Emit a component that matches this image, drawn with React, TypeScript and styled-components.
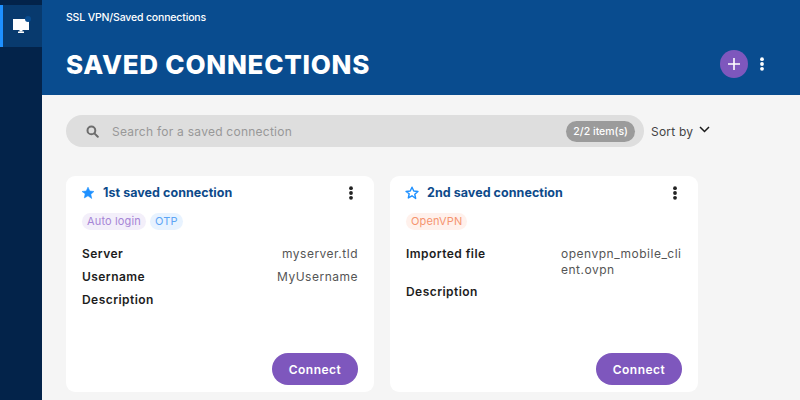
import React from 'react';
import styled, { createGlobalStyle } from 'styled-components';

const GlobalStyle = createGlobalStyle`
  html, body {
    margin: 0;
    height: 100%;
    overflow: hidden;
  }
  #root {
    height: 100%;
  }
  * {
    box-sizing: border-box;
  }
  body {
    font-family: Inter, "Noto Sans", "Liberation Sans", sans-serif;
    background: #f5f5f5;
  }
`;

const Shell = styled.div`
  display: flex;
  width: 800px;
  height: 400px;
`;

const Sidebar = styled.nav`
  width: 42px;
  flex: none;
  padding-top: 5px;
  background: #03234a;
`;

const NavItem = styled.div`
  display: flex;
  align-items: flex-start;
  height: 42px;
  padding: 11px 0 0 9px;
  border-left: 3px solid #1e90ff;
  background: #083a6e;
`;

const Main = styled.main`
  flex: 1;
  display: flex;
  flex-direction: column;
  min-width: 0;
`;

const Header = styled.header`
  height: 95px;
  flex: none;
  padding: 11px 24px 0;
  background: #094c8f;
  color: #fff;
`;

const Breadcrumb = styled.div`
  height: 13px;
  font-size: 10.5px;
  line-height: 13px;
  font-weight: 500;
  letter-spacing: -0.16px;
`;

const TitleRow = styled.div`
  display: flex;
  align-items: center;
  justify-content: space-between;
  margin-top: 24px;
  height: 32px;
`;

const Title = styled.h1`
  margin: 2px 0 0;
  font-size: 26px;
  line-height: 32px;
  font-weight: 800;
  letter-spacing: 0.75px;
`;

const HeaderActions = styled.div`
  display: flex;
  align-items: center;
  gap: 11px;
  margin-right: 11px;
`;

const AddButton = styled.button`
  display: flex;
  align-items: center;
  justify-content: center;
  width: 28px;
  height: 28px;
  padding: 0;
  border: 0;
  border-radius: 50%;
  background: #7e57bd;
`;

const Content = styled.div`
  flex: 1;
  padding: 20px 24px 0;
`;

const SearchRow = styled.div`
  display: flex;
  align-items: center;
  gap: 7px;
  height: 32px;
`;

const SearchBar = styled.div`
  width: 578px;
  height: 32px;
  display: flex;
  align-items: center;
  padding: 0 9px 0 20px;
  border-radius: 16px;
  background: #dedede;
`;

const Placeholder = styled.span`
  flex: 1;
  margin-left: 13px;
  font-size: 12px;
  letter-spacing: 0.25px;
  color: #989898;
`;

const Count = styled.span`
  height: 21px;
  padding: 0 7px;
  border-radius: 11px;
  background: #9b9b9b;
  color: #fff;
  font-size: 10.5px;
  line-height: 21px;
  font-weight: 500;
`;

const SortBy = styled.div`
  display: flex;
  align-items: center;
  gap: 6px;
  font-size: 12px;
  letter-spacing: 0.2px;
  color: #444;
`;

const ChevronWrap = styled.span`
  display: flex;
  margin-bottom: 4px;
`;

const Cards = styled.div`
  display: flex;
  gap: 16px;
  margin-top: 29px;
`;

const Card = styled.section`
  position: relative;
  width: 308px;
  height: 216px;
  padding: 8px 20px 0 15px;
  border-radius: 9px;
  background: #fff;
`;

const CardHead = styled.div`
  display: flex;
  align-items: center;
  height: 18px;
`;

const CardTitle = styled.h2`
  flex: 1;
  margin: 0 0 0 8px;
  font-size: 12.5px;
  line-height: 18px;
  font-weight: 700;
  letter-spacing: 0.05px;
  color: #0d4a8a;
`;

const Tags = styled.div`
  display: flex;
  gap: 4px;
  margin: 11px 0 0 1px;
`;

const Tag = styled.span<{ $bg: string; $fg: string }>`
  height: 17px;
  padding: 0 5px;
  border-radius: 9px;
  font-size: 11px;
  line-height: 17px;
  letter-spacing: 0.15px;
  background: ${({ $bg }) => $bg};
  color: ${({ $fg }) => $fg};
`;

const Rows = styled.dl`
  display: grid;
  grid-template-columns: 155px 121px;
  row-gap: 7px;
  margin: 16px 0 0 1px;
`;

const Label = styled.dt`
  font-size: 12px;
  line-height: 16px;
  font-weight: 600;
  letter-spacing: 0.45px;
  color: #1d1d1d;
`;

const Value = styled.dd<{ $wrap?: boolean }>`
  margin: 0;
  font-size: 12px;
  line-height: 15.5px;
  letter-spacing: 0.5px;
  color: #555;
  text-align: ${({ $wrap }) => ($wrap ? 'left' : 'right')};
  overflow-wrap: anywhere;
`;

const ConnectButton = styled.button`
  position: absolute;
  right: 16px;
  bottom: 7px;
  width: 86px;
  height: 32px;
  padding: 0;
  border: 0;
  border-radius: 16px;
  background: #7e57bd;
  color: #fff;
  font-family: inherit;
  font-size: 12px;
  font-weight: 600;
  letter-spacing: 0.5px;
`;

const Kebab = ({ color }: { color: string }) => (
  <svg width="6" height="14" viewBox="0 0 6 14" fill={color}>
    <circle cx="3" cy="2.2" r="1.9" />
    <circle cx="3" cy="7" r="1.9" />
    <circle cx="3" cy="11.8" r="1.9" />
  </svg>
);

const Star = ({ filled }: { filled?: boolean }) => (
  <svg width="14" height="14" viewBox="0 0 24 24" fill={filled ? '#1e90ff' : 'none'} stroke="#1e90ff" strokeWidth={filled ? 1 : 2.4} strokeLinejoin="round">
    <path d="M12 2l3 6.6 7.2.8-5.4 4.9 1.5 7.1L12 16.8l-6.3 3.6 1.5-7.1L1.8 9.4 9 8.6z" />
  </svg>
);

const Monitor = () => (
  <svg width="20" height="17" viewBox="0 0 20 17">
    <rect x="1" y="3" width="16" height="11" fill="#fff" />
    <rect x="7.5" y="14" width="3" height="1.5" fill="#fff" />
    <rect x="6" y="15.5" width="6" height="1.5" fill="#fff" />
    <circle cx="16" cy="3" r="3" fill="#094c8f" />
  </svg>
);

const SearchIcon = () => (
  <svg width="13" height="13" viewBox="0 0 13 13" fill="none" stroke="#6d6d6d" strokeWidth="2" strokeLinecap="round">
    <circle cx="5.4" cy="5.4" r="3.9" />
    <path d="M8.4 8.4l3.4 3.4" />
  </svg>
);

const Plus = () => (
  <svg width="14" height="14" viewBox="0 0 14 14" stroke="#fff" strokeWidth="1.6">
    <path d="M7 1v12M1 7h12" />
  </svg>
);

const Chevron = () => (
  <svg width="11" height="7" viewBox="0 0 11 7" fill="none" stroke="#1a1a1a" strokeWidth="1.5">
    <path d="M1 1l4.5 4.5L10 1" />
  </svg>
);

export default function App() {
  return (
    <Shell>
      <GlobalStyle />
      <Sidebar>
        <NavItem>
          <Monitor />
        </NavItem>
      </Sidebar>
      <Main>
        <Header>
          <Breadcrumb>SSL VPN/Saved connections</Breadcrumb>
          <TitleRow>
            <Title>SAVED CONNECTIONS</Title>
            <HeaderActions>
              <AddButton>
                <Plus />
              </AddButton>
              <Kebab color="#fff" />
            </HeaderActions>
          </TitleRow>
        </Header>
        <Content>
          <SearchRow>
            <SearchBar>
              <SearchIcon />
              <Placeholder>Search for a saved connection</Placeholder>
              <Count>2/2 item(s)</Count>
            </SearchBar>
            <SortBy>
              Sort by
              <ChevronWrap>
                <Chevron />
              </ChevronWrap>
            </SortBy>
          </SearchRow>
          <Cards>
            <Card>
              <CardHead>
                <Star filled />
                <CardTitle>1st saved connection</CardTitle>
                <Kebab color="#222" />
              </CardHead>
              <Tags>
                <Tag $bg="#f3effa" $fg="#a685d6">Auto login</Tag>
                <Tag $bg="#e8f3ff" $fg="#5ea6f5">OTP</Tag>
              </Tags>
              <Rows>
                <Label>Server</Label>
                <Value>myserver.tld</Value>
                <Label>Username</Label>
                <Value>MyUsername</Value>
                <Label>Description</Label>
                <Value />
              </Rows>
              <ConnectButton>Connect</ConnectButton>
            </Card>
            <Card>
              <CardHead>
                <Star />
                <CardTitle>2nd saved connection</CardTitle>
                <Kebab color="#222" />
              </CardHead>
              <Tags>
                <Tag $bg="#fff1ec" $fg="#f5946f">OpenVPN</Tag>
              </Tags>
              <Rows>
                <Label>Imported file</Label>
                <Value $wrap>openvpn_mobile_client.ovpn</Value>
                <Label>Description</Label>
                <Value />
              </Rows>
              <ConnectButton>Connect</ConnectButton>
            </Card>
          </Cards>
        </Content>
      </Main>
    </Shell>
  );
}
